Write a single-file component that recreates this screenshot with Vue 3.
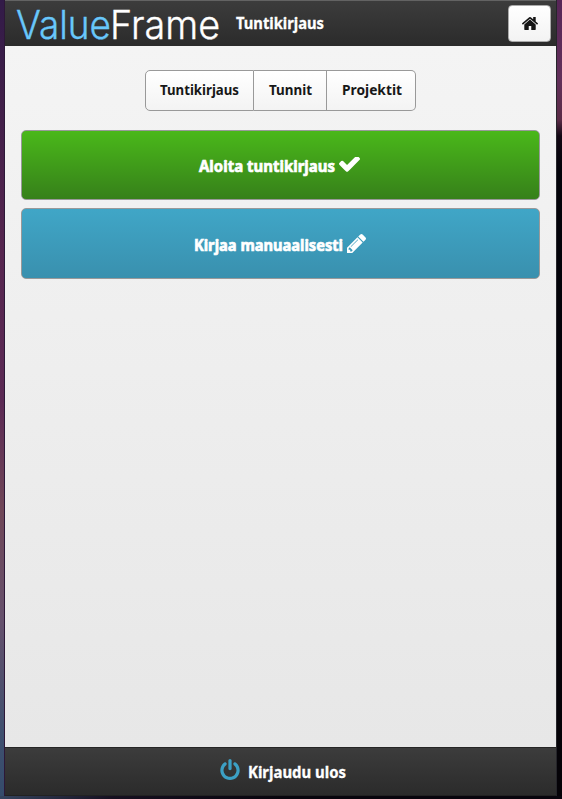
<script setup>
const tabs = [
  { label: 'Tuntikirjaus', width: 79, cell: 109 },
  { label: 'Tunnit', width: 43, cell: 73 },
  { label: 'Projektit', width: 60, cell: 89 }
]
</script>

<template>
  <div class="desktop">
    <div class="window">
      <header class="bar header">
        <svg class="logo" width="206" height="40" viewBox="0 0 206 40">
          <text class="blue" x="0" y="34" textLength="95" lengthAdjust="spacingAndGlyphs">Value</text>
          <text x="94" y="34" textLength="110" lengthAdjust="spacingAndGlyphs">Frame</text>
        </svg>
        <svg class="label bold title" width="88" height="22"><text x="0" y="16" textLength="88" lengthAdjust="spacingAndGlyphs">Tuntikirjaus</text></svg>
        <button class="home" aria-label="Etusivu">
          <svg width="16" height="13" viewBox="89 253 1614 1283" preserveAspectRatio="none"><path d="M1472 992v480q0 26-19 45t-45 19h-384v-384h-256v384h-384q-26 0-45-19t-19-45v-480q0-1 .5-3t.5-3l575-474 575 474q1 2 1 6zm223-69l-62 74q-8 9-21 11h-3q-13 0-21-7l-692-577-692 577q-12 8-24 7-13-2-21-11l-62-74q-8-10-7-23.5t11-21.5l719-599q32-26 76-26t76 26l244 204v-195q0-14 9-23t23-9h192q14 0 23 9t9 23v408l219 182q10 8 11 21.5t-7 23.5z" /></svg>
        </button>
      </header>

      <main>
        <nav>
          <button v-for="t in tabs" :key="t.label" :style="{ width: t.cell + 'px' }">
            <svg class="label small" :width="t.width" height="20"><text x="0" y="15" :textLength="t.width" lengthAdjust="spacingAndGlyphs">{{ t.label }}</text></svg>
          </button>
        </nav>
        <button class="action green">
          <svg class="label heavy" width="136" height="22"><text x="0" y="16" textLength="136" lengthAdjust="spacingAndGlyphs">Aloita tuntikirjaus</text></svg>
          <svg class="check" width="21" height="15" viewBox="121 434 1550 1088"><path d="M1671 566q0 40-28 68l-724 724-136 136q-28 28-68 28t-68-28l-136-136-362-362q-28-28-28-68t28-68l136-136q28-28 68-28t68 28l294 295 656-657q28-28 68-28t68 28l136 136q28 28 28 68z" /></svg>
        </button>
        <button class="action teal">
          <svg class="label heavy" width="149" height="22"><text x="0" y="16" textLength="149" lengthAdjust="spacingAndGlyphs">Kirjaa manuaalisesti</text></svg>
          <svg class="pencil" width="19" height="19" viewBox="128 149 1515 1515"><path d="M491 1536l91-91-235-235-91 91v107h128v128h107zm523-928q0-22-22-22-10 0-17 7l-542 542q-7 7-7 17 0 22 22 22 10 0 17-7l542-542q7-7 7-17zm-54-192l416 416-832 832h-416v-416zm683 96q0 53-37 90l-166 166-416-416 166-165q36-38 90-38 53 0 91 38l235 234q37 39 37 91z" /></svg>
        </button>
      </main>

      <footer class="bar footer">
        <svg class="power" width="20" height="21" viewBox="128 0 1536 1664"><path d="M1664 896q0 156-61 298t-164 245-245 164-298 61-298-61-245-164-164-245-61-298q0-182 80.5-343t226.5-270q43-32 95.5-25t83.5 50q32 42 24.5 94.5t-49.5 84.5q-98 74-151.5 181t-53.5 228q0 104 40.5 198.5t109.5 163.5 163.5 109.5 198.5 40.5 198.5-40.5 163.5-109.5 109.5-163.5 40.5-198.5q0-121-53.5-228t-151.5-181q-42-32-49.5-84.5t24.5-94.5q31-43 84-50t95 25q146 109 226.5 270t80.5 343zm-640-768v640q0 52-38 90t-90 38-90-38-38-90v-640q0-52 38-90t90-38 90 38 38 90z" /></svg>
        <svg class="label bold" width="98" height="22"><text x="0" y="16" textLength="98" lengthAdjust="spacingAndGlyphs">Kirjaudu ulos</text></svg>
      </footer>
    </div>
    <div class="backdrop"></div>
  </div>
</template>

<style>
body { margin: 0; overflow: hidden; }
</style>

<style scoped>
.desktop {
  box-sizing: border-box;
  width: 562px;
  height: 799px;
  display: grid;
  grid-template-columns: 552px 5px;
  padding: 0 0 3px 5px;
  background:
    linear-gradient(90deg, #35445f, #161020 20%, #08050d 50%) 0 796px / 562px 3px no-repeat,
    linear-gradient(#321b48, #43204a 120px, #56264f 250px, #5c2a55 400px, #704758 510px, #66516d 620px, #40506f 730px, #344b6b);
}
.backdrop { background: linear-gradient(#572557, #62305a 80px, #5a2b46 120px, #120713 136px, #03030a 170px, #050308); }
.window { box-sizing: border-box; height: 796px; display: flex; flex-direction: column; border-right: 1px solid #25252a; box-shadow: -1px 0 #2d1838; }
.bar { box-sizing: border-box; display: flex; background: linear-gradient(#3c3c3c, #2b2b2b); }
.header { height: 46px; border-top: 1px solid #636363; align-items: flex-start; padding: 4px 5px 0 11px; }
.logo { display: block; overflow: visible; font: 300 39px Inter, sans-serif; fill: #fff; stroke: #fff; stroke-width: .35px; }
.logo .blue { fill: #68c7fb; stroke: #68c7fb; }
.label { display: block; overflow: visible; font: 700 16px "Noto Sans", sans-serif; fill: #fff; }
.bold { stroke: #fff; stroke-width: .3px; }
.title { margin: 8px auto 0 14px; }
button { box-sizing: border-box; display: flex; padding: 0; border: 1px solid #999; margin: 0; }
.home { width: 43px; height: 37px; align-items: center; justify-content: center; border-color: #aaa; border-radius: 4px; background: linear-gradient(#fff, #f3f3f3); fill: #151515; }
.home svg { margin-top: -1px; }
main { box-sizing: border-box; height: 701px; padding: 24px 16px 0; background: linear-gradient(#f4f4f4, #e7e7e7); }
nav { display: flex; justify-content: center; height: 41px; margin-bottom: 19px; }
nav button { background: linear-gradient(#fff, #f3f3f3); height: 41px; padding-left: 14px; padding-top: 9px; }
nav button + button { border-left: 0; padding-left: 15px; }
nav button:first-child { border-radius: 5px 0 0 5px; }
nav button:last-child { border-radius: 0 5px 5px 0; }
.small { font-size: 14px; fill: #171717; }
.action { width: 519px; height: 70px; align-items: flex-start; justify-content: center; border-radius: 5px; fill: #fff; padding-right: 2px; }
.action .label { margin-top: 25px; }
.heavy { stroke: #fff; stroke-width: .7px; }
.green { background: linear-gradient(#4ab81a, #36801a); margin-bottom: 8px; }
.teal { height: 71px; background: linear-gradient(#40a6c7, #3990ae); }
.teal .label { margin-top: 26px; }
.check { margin: 26px 0 0 4px; }
.pencil { margin: 25px 0 0 4px; }
.footer { height: 49px; justify-content: center; align-items: flex-start; border-top: 1px solid #252525; border-bottom: 1px solid #222; padding-left: 2px; }
.power { fill: #3ca0c5; margin: 11px 8px 0 2px; }
.footer .label { margin-top: 14px; }
</style>
